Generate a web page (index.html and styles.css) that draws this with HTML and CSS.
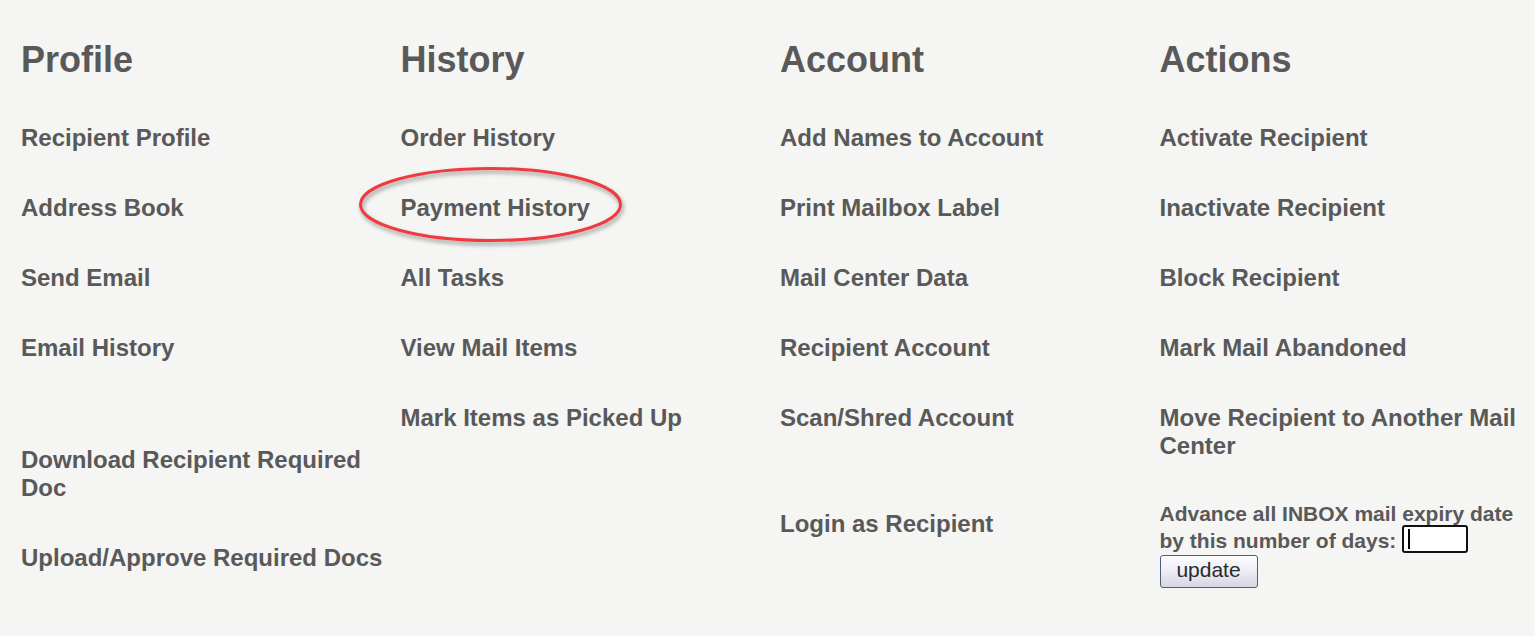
FILE: index.html
```html
<!DOCTYPE html>
<html lang="en">
<head>
<meta charset="utf-8">
<title>Recipient menu</title>
<link rel="stylesheet" href="styles.css">
</head>
<body>
<main class="menu">
  <section class="col">
    <h2 class="col-title">Profile</h2>
    <a class="link" href="#">Recipient Profile</a>
    <a class="link" href="#">Address Book</a>
    <a class="link" href="#">Send Email</a>
    <a class="link" href="#">Email History</a>
    <a class="link link-narrow push-profile" href="#">Download Recipient Required Doc</a>
    <a class="link" href="#">Upload/Approve Required Docs</a>
  </section>
  <section class="col col-history">
    <h2 class="col-title">History</h2>
    <a class="link" href="#">Order History</a>
    <a class="link" href="#">Payment History</a>
    <a class="link" href="#">All Tasks</a>
    <a class="link" href="#">View Mail Items</a>
    <a class="link" href="#">Mark Items as Picked Up</a>
    <svg class="highlight" width="280" height="90" viewBox="0 0 280 90" aria-hidden="true">
      <defs>
        <filter id="shadow" x="-10%" y="-20%" width="120%" height="150%">
          <feDropShadow dx="1.5" dy="3" stdDeviation="2" flood-color="#7a7a7a" flood-opacity="0.75"/>
        </filter>
      </defs>
      <ellipse cx="133.5" cy="41.5" rx="130" ry="36" fill="none" stroke="#ef3b3f" stroke-width="3" filter="url(#shadow)"/>
    </svg>
  </section>
  <section class="col">
    <h2 class="col-title">Account</h2>
    <a class="link" href="#">Add Names to Account</a>
    <a class="link" href="#">Print Mailbox Label</a>
    <a class="link" href="#">Mail Center Data</a>
    <a class="link" href="#">Recipient Account</a>
    <a class="link" href="#">Scan/Shred Account</a>
    <a class="link push-account" href="#">Login as Recipient</a>
  </section>
  <section class="col">
    <h2 class="col-title">Actions</h2>
    <a class="link" href="#">Activate Recipient</a>
    <a class="link" href="#">Inactivate Recipient</a>
    <a class="link" href="#">Block Recipient</a>
    <a class="link" href="#">Mark Mail Abandoned</a>
    <a class="link" href="#">Move Recipient to Another Mail Center</a>
    <form class="advance">
      <label class="advance-label">Advance all INBOX mail expiry date by this number of days: <input class="days" type="text" aria-label="days"></label>
      <button class="update" type="button">update</button>
    </form>
  </section>
</main>
</body>
</html>
```

FILE: styles.css
```css
html, body {
  margin: 0;
  padding: 0;
  background: #f5f5f3;
}

body {
  font-family: "Liberation Sans", Arial, sans-serif;
  color: #595959;
}

.menu {
  display: grid;
  grid-template-columns: repeat(4, 379.5px);
  padding: 39px 0 0 21px;
}

.col {
  display: flex;
  flex-direction: column;
  align-items: flex-start;
  gap: 42px;
  position: relative;
}

.col-title {
  margin: 0 0 1px 0;
  font-size: 36px;
  line-height: 42px;
  font-weight: bold;
  color: #595959;
}

.link {
  display: block;
  font-size: 24px;
  line-height: 28px;
  font-weight: bold;
  color: #595959;
  text-decoration: none;
  padding-right: 10px;
}

.link-narrow {
  max-width: 350px;
}

.push-profile {
  margin-top: 42px;
}

.push-account {
  margin-top: 36px;
}

.advance {
  margin: -2px 0 0 0;
  display: flex;
  flex-direction: column;
  align-items: flex-start;
  gap: 1px;
}

.advance-label {
  display: block;
  max-width: 370px;
  font-size: 21px;
  line-height: 27px;
  font-weight: bold;
  color: #595959;
}

.days {
  box-sizing: border-box;
  display: inline-block;
  width: 66px;
  height: 28px;
  margin: -2px 0 0 0;
  padding: 0;
  vertical-align: top;
  border: 2px solid #111;
  border-radius: 3px;
  background: #fff linear-gradient(#000, #000) no-repeat 4px 2px / 2px 20px;
  font: 18px "Liberation Sans", Arial, sans-serif;
  outline: none;
}

.update {
  box-sizing: border-box;
  width: 98px;
  height: 33px;
  padding: 0 0 3px 0;
  border: 1px solid #4b5f7a;
  border-radius: 3px;
  background: linear-gradient(#fdfdff 0%, #eeeef6 45%, #d6d6e4 100%);
  font: 21px "Liberation Sans", Arial, sans-serif;
  color: #2a2a2a;
}

.highlight {
  position: absolute;
  left: -44px;
  top: 124px;
  pointer-events: none;
}
```
